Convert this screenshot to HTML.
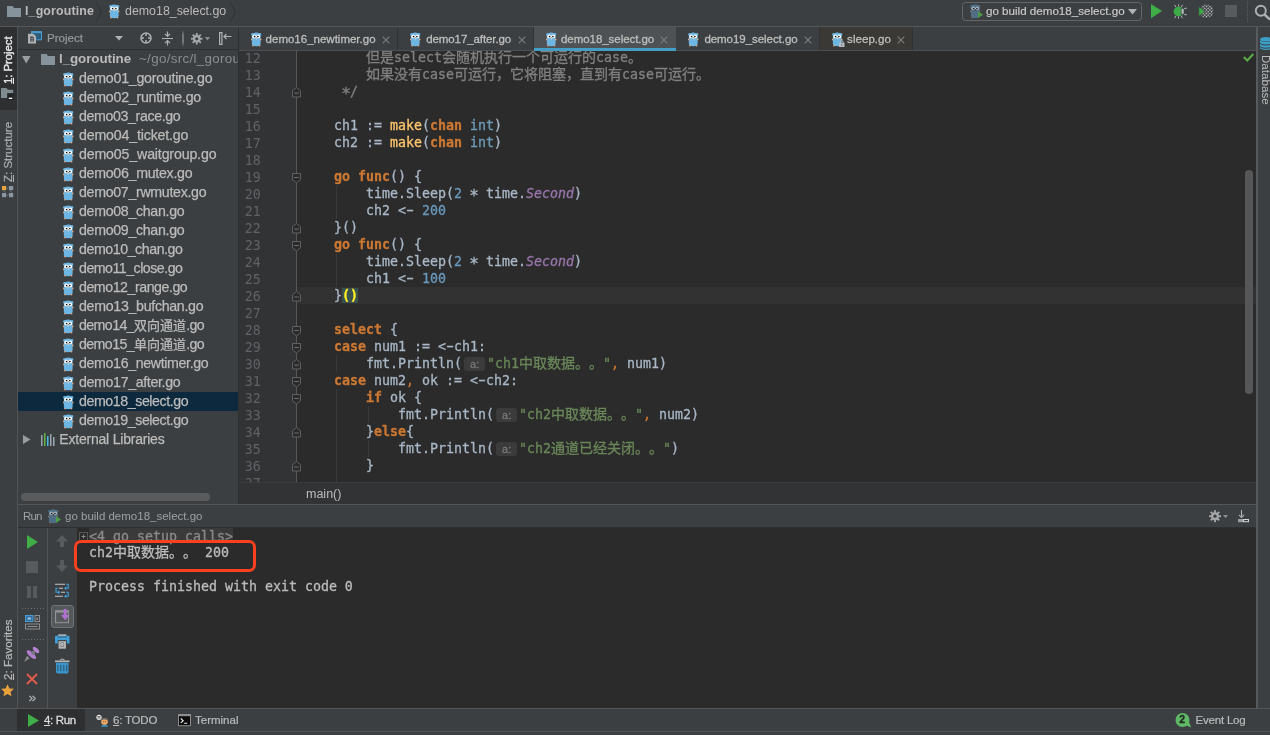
<!DOCTYPE html>
<html lang="zh">
<head>
<meta charset="utf-8">
<title>l_goroutine - demo18_select.go</title>
<style>
*{box-sizing:border-box;margin:0;padding:0}
html,body{width:1270px;height:735px;overflow:hidden;background:#3c3f41}
body{position:relative;font-family:"Liberation Sans","Noto Sans CJK SC",sans-serif;font-size:13px;color:#bbbbbb;-webkit-font-smoothing:antialiased;text-spacing-trim:space-all}
.abs{position:absolute}
.t{position:absolute;white-space:nowrap;line-height:16px;height:16px}
svg{position:absolute;overflow:visible}
.b{font-weight:bold}
.hl{position:absolute;background:#323232;height:1px}
.vl{position:absolute;background:#323232;width:1px}
/* tree */
.row{position:absolute;left:18px;width:220px;height:19px}
.row .t{left:61px;top:0.5px;font-size:14.2px;letter-spacing:-0.38px;color:#bbbbbb;-webkit-text-stroke:0.25px #bbbbbb}
.row svg.gi{left:44.8px;top:2.8px}
/* editor tabs */
.tab{position:absolute;top:27px;height:24px;border-right:1px solid #323232}
.tab .t{top:4px;font-size:11.5px;color:#bebebe;-webkit-text-stroke:0.3px}
.tab .x{position:absolute;top:9px;width:8px;height:8px}
/* code */
.code{font-family:"DejaVu Sans Mono","Liberation Mono","Noto Sans CJK SC",monospace;font-size:13.3px}
.ln{position:absolute;left:239px;width:21.800px;text-align:right;font-family:"DejaVu Sans Mono","Liberation Mono",monospace;font-size:13.29px;color:#606366;height:17px;line-height:17px;padding-top:1px}
.cl{position:absolute;left:302px;height:17px;line-height:17px;white-space:pre;color:#a9b7c6;-webkit-text-stroke:0.3px;font-family:"DejaVu Sans Mono","Liberation Mono","Noto Sans CJK SC",monospace;font-size:13.29px}
.k{color:#cc7832;font-weight:bold}
.f{color:#ffc66d}
.n{color:#6897bb}
.s{color:#6a8759}
.c{color:#808080}
.ty{color:#6e9db7}
.cn{color:#9876aa;font-style:italic}
.cm{color:#cc7832}
.hint{display:inline-block;background:#3b3b3b;color:#787878;border-radius:3px;font-family:"Liberation Sans",sans-serif;font-size:11px;line-height:14px;height:14px;width:20.5px;text-align:center;margin:0 2.200px 0 2.5px;vertical-align:0.5px;font-weight:normal}
.mb{background:#3b514d;color:#ffef28;font-weight:bold}
.z{font-size:14px}
.s .z{font-size:14px}
.zc{font-size:14px}
.as{position:relative;top:3px;left:-0.8px;font-size:16px;line-height:10px;letter-spacing:-1.630px}
.da{display:inline-block;transform:scaleX(1.700)}
.ig{position:absolute;width:1px;background:#393939}
.con{position:absolute;left:89px;white-space:pre;-webkit-text-stroke:0.3px;font-family:"DejaVu Sans Mono","Liberation Mono","Noto Sans CJK SC",monospace;font-size:13.29px;line-height:17px;height:17px;color:#bbbbbb}
.vt{position:absolute;white-space:nowrap;font-size:12px;line-height:14px;color:#bbbbbb;transform-origin:0 0}
</style>
</head>
<body>
<div id="app" style="position:absolute;left:0;top:0;width:1270px;height:735px;overflow:hidden;will-change:transform">
<!-- NAV BAR -->
<div id="nav" class="abs" style="left:0;top:0;width:1270px;height:26px;background:#3c3f41">
  <svg style="left:7px;top:6px" width="14" height="11" viewBox="0 0 14 11"><path d="M0 0H5.600L7 2H14V11H0z" fill="#87939a"/></svg>
  <span class="t b" id="bc1" style="left:25px;top:3px;font-size:12.4px;letter-spacing:0.15px">l_goroutine</span>
  <svg style="left:94px;top:0" width="10" height="24"><path d="M1.500 1L7.500 12L1.500 23" stroke="#2f3133" stroke-width="1" fill="none"/></svg>
  <svg style="left:109px;top:3.800px" width="10.500" height="14.500" viewBox="0 0 11 15"><circle cx="1.700" cy="2.500" r="1.500" fill="#6db6e3"/> <circle cx="9.300" cy="2.500" r="1.500" fill="#6db6e3"/> <path d="M.9 5C.9 2 3 .3 5.500.3S10.100 2 10.100 5V12.200C10.100 14 8.400 14.800 5.500 14.800S.9 14 .9 12.200z" fill="#6db6e3"/> <circle cx="3.300" cy="4.500" r="2" fill="#fdfdfd"/> <circle cx="7.700" cy="4.500" r="2" fill="#fdfdfd"/> <rect x="4.500" y="3.800" width="2" height="1.800" fill="#fdfdfd"/> <circle cx="3.800" cy="4.700" r=".85" fill="#0a0a0a"/> <circle cx="7.200" cy="4.700" r=".85" fill="#0a0a0a"/> <ellipse cx="5.500" cy="6.100" rx="1" ry=".65" fill="#a8907c"/> <rect x="4.900" y="6.500" width="1.200" height="1.100" rx=".3" fill="#f7f3ea"/> <ellipse cx=".8" cy="7.700" rx=".8" ry=".95" fill="#e3ab86"/> <ellipse cx="10.200" cy="7.700" rx=".8" ry=".95" fill="#e3ab86"/> <ellipse cx="2.100" cy="14.300" rx=".95" ry=".7" fill="#e3ab86"/> <ellipse cx="8.900" cy="14.300" rx=".95" ry=".7" fill="#e3ab86"/></svg>
  <span class="t" id="bc2" style="left:125px;top:3px;font-size:12.4px">demo18_select.go</span>
  <svg style="left:228px;top:0" width="10" height="24"><path d="M1.500 1L7.500 12L1.500 23" stroke="#2f3133" stroke-width="1" fill="none"/></svg>
  <!-- run config -->
  <div class="abs" style="left:962px;top:1.800px;width:179.500px;height:19.300px;border:1.200px solid #646768;border-radius:3.500px;background:#3c3f41"></div>
  <svg style="left:969.600px;top:3.700px" width="13.500" height="14.500" viewBox="0 0 14 15"><circle cx="1.700" cy="2.500" r="1.500" fill="#4f6e85"/> <circle cx="9.300" cy="2.500" r="1.500" fill="#4f6e85"/> <path d="M.9 5C.9 2 3 .3 5.500.3S10.100 2 10.100 5V12.200C10.100 14 8.400 14.800 5.500 14.800S.9 14 .9 12.200z" fill="#4f6e85"/> <circle cx="3.400" cy="4.500" r="1.800" fill="#aeb8c0"/> <circle cx="7.600" cy="4.500" r="1.800" fill="#aeb8c0"/> <rect x="4.500" y="3.900" width="2" height="1.600" fill="#aeb8c0"/> <circle cx="3.800" cy="4.700" r=".85" fill="#151515"/> <circle cx="7.200" cy="4.700" r=".85" fill="#151515"/> <ellipse cx="5.500" cy="6.100" rx="1" ry=".65" fill="#3a3a3a"/> <ellipse cx=".8" cy="7.700" rx=".7" ry=".9" fill="#8a7566"/> <ellipse cx="10.200" cy="7.300" rx=".6" ry=".8" fill="#8a7566"/> <ellipse cx="2.100" cy="14.300" rx=".9" ry=".7" fill="#8a7566"/> <path d="M8.300 7.400L13.600 11L8.300 14.600z" fill="#4f9a48"/></svg>
  <span class="t" id="rc" style="left:986px;top:3px;font-size:11.6px;color:#c8c8c8;-webkit-text-stroke:0.2px">go build demo18_select.go</span>
  <svg style="left:1128px;top:9px" width="9" height="6"><path d="M0 0H9L4.500 5.500z" fill="#afb1b3"/></svg>
  <svg style="left:1150.700px;top:4px" width="11" height="14.200" viewBox="0 0 10 14" preserveAspectRatio="none"><path d="M0 0L10 7L0 14z" fill="#3fae47"/></svg>
  <!-- debug bug -->
  <svg style="left:1173px;top:3.5px" width="16" height="15" viewBox="0 0 16 15">
    <path d="M3 3.200L1.600 .8M5.600 2.600V.5M8.200 3.200L9.600 .8M3 11.800L1.600 14.200M5.600 12.400V14.500M8.200 11.800L9.600 14.200" stroke="#b4b6b8" stroke-width="1" fill="none"/>
    <ellipse cx="5.800" cy="7.500" rx="5.200" ry="4.800" fill="#3aab46"/>
    <path d="M7.800 3.300Q13.800 7.500 7.800 11.700z" fill="#3c3f41"/>
    <path d="M8.800 4.300Q13 7.500 8.800 10.700Q7.600 7.500 8.800 4.300z" fill="#b4b6b8"/>
    <path d="M10.500 5.500Q11.500 3.800 13.800 4.200M10.500 9.500Q11.500 11.200 13.800 10.800" stroke="#b4b6b8" stroke-width="1" fill="none"/>
  </svg>
  <!-- coverage -->
  <svg style="left:1198px;top:3.5px" width="16" height="15" viewBox="0 0 16 15">
    <defs><pattern id="chk" width="2.400" height="2.400" patternUnits="userSpaceOnUse" patternTransform="rotate(45)"><rect width="1.300" height="1.300" fill="#d4d6d8"/></pattern>
    <clipPath id="chkc"><path d="M3.500 2Q9 -1 14.500 2.500Q16 7.500 14.500 11.500Q9 15.500 3.500 12.500z"/></clipPath></defs>
    <rect x="3" y="0" width="13" height="15" fill="url(#chk)" clip-path="url(#chkc)"/>
    <path d="M.8 2.500L6.800 7.300L.8 12.200z" fill="#3aab46" stroke="#3c3f41" stroke-width=".6"/>
  </svg>
  <div class="abs" style="left:1225px;top:5px;width:12px;height:12px;background:#585b5d"></div>
  <div class="abs" style="left:1247px;top:1px;width:1px;height:22px;background-image:linear-gradient(#5c5f60 50%,transparent 50%);background-size:1px 2px"></div>
  <svg style="left:1254px;top:3px" width="17" height="17" viewBox="0 0 17 17"><circle cx="6.800" cy="7.700" r="5" stroke="#afb1b3" stroke-width="1.900" fill="none"/><path d="M10.500 11.500L16 16.500" stroke="#afb1b3" stroke-width="2.400"/></svg>
</div>
<div class="hl" style="left:0;top:26px;width:1270px;background:#555759"></div>

<!-- LEFT STRIPE -->
<div id="lstripe" class="abs" style="left:0;top:27px;width:17px;height:681px;background:#3c3f41">
  <div class="abs" style="left:0;top:0;width:17px;height:83px;background:#2d2f30"></div>
  <span class="vt" id="v1" style="left:1px;top:56.5px;transform:rotate(-90deg);font-size:11.5px;letter-spacing:-0.1px;color:#e4e4e4;-webkit-text-stroke:0.4px #e4e4e4"><u>1</u>: Project</span>
  <svg style="left:1px;top:61px" width="13" height="12" viewBox="0 0 13 12"><path d="M0 0H5.500L7 1.800H12.200V5.300H6.300V10H0z" fill="#7f8b91"/><rect x="6.400" y="5.300" width="6.300" height="6.500" fill="#232525"/><rect x="7.800" y="9.700" width="3.500" height="1.300" fill="#ffffff"/></svg>
  <span class="vt" id="v2" style="left:1px;top:154.5px;transform:rotate(-90deg);font-size:11.5px;color:#a8abad;-webkit-text-stroke:0.25px"><u>Z</u>: Structure</span>
  <svg style="left:2px;top:159px" width="12" height="12" viewBox="0 0 12 12"><rect x="0" y="0" width="4.200" height="4.200" fill="#e8a33d"/><rect x="7" y="0" width="4.200" height="4.200" fill="#8a96a0"/><rect x="0" y="7" width="4.200" height="4.200" fill="#8a96a0"/><rect x="7" y="7" width="4.200" height="4.200" fill="#8a96a0"/><path d="M4.500 3L6.700 1.500M1.500 4.500L3.500 6.700M8 4.500L9.800 6.700M4.500 9.800L6.700 8.300" stroke="#6f7b85" stroke-width="1"/></svg>
  <span class="vt" id="v3" style="left:1px;top:652.5px;transform:rotate(-90deg);font-size:11.6px;-webkit-text-stroke:0.2px"><u>2</u>: Favorites</span>
  <svg style="left:1px;top:656.5px" width="13" height="12.5" viewBox="0 0 14 13"><path d="M7 0L9.100 4.500L14 5L10.300 8.300L11.400 13L7 10.500L2.600 13L3.700 8.300L0 5L4.900 4.500z" fill="#e8a33d"/></svg>
</div>
<div class="vl" style="left:17px;top:27px;height:681px;background:#515355"></div>

<!-- PROJECT PANEL -->
<div id="proj" class="abs" style="left:18px;top:27px;width:220px;height:477px;background:#3c3f41">
  <!-- header -->
  <svg style="left:10px;top:3.500px" width="15" height="13" viewBox="0 0 15 13"><rect x="3.500" y=".8" width="10" height="8" fill="#2f5d7c" stroke="#4a9cd0" stroke-width="1"/><rect x="3" y=".3" width="11" height="1.800" fill="#4a9cd0"/><path d="M0 2.800H5.500L8 5.300V12.500H0z" fill="#b0b2b4"/><path d="M2.300 5.500H4.800L5.800 6.500V10.500H2.300z" fill="#3c3f41"/><path d="M3.200 7.300H5M3.200 9.200H5" stroke="#b0b2b4" stroke-width=".9"/></svg>
  <span class="t" id="ph" style="left:29px;top:3px;font-size:11.6px;color:#979a9c;-webkit-text-stroke:0.2px">Project</span>
  <svg style="left:97px;top:9px" width="8" height="5"><path d="M0 0H8L4 4.500z" fill="#afb1b3"/></svg>
  <svg style="left:122px;top:5px" width="12" height="12" viewBox="0 0 12 12"><circle cx="6" cy="6" r="5" stroke="#afb1b3" stroke-width="1.500" fill="none"/><path d="M6 1V4M6 8V11M1 6H4M8 6H11" stroke="#afb1b3" stroke-width="1.500"/></svg>
  <svg style="left:144px;top:4px" width="11" height="15" viewBox="0 0 11 15"><path d="M0 7.500H11M5.500 .5V5M5.500 10V14.500M3 2.800L5.500 5.300L8 2.800M3 12.200L5.500 9.700L8 12.200" stroke="#afb1b3" stroke-width="1.200" fill="none"/></svg>
  <div class="abs" style="left:164px;top:3px;width:2px;height:17px;background:linear-gradient(#3c3f41,#74777a 30%,#74777a 70%,#3c3f41)"></div>
  <svg style="left:173px;top:6px" width="11.5" height="11.5" viewBox="0 0 14 14"><g fill="#a4a6a8"> <circle cx="7" cy="7" r="4.6"/> <rect x="5.900" y="0" width="2.200" height="14"/> <rect x="5.900" y="0" width="2.200" height="14" transform="rotate(45 7 7)"/> <rect x="5.900" y="0" width="2.200" height="14" transform="rotate(90 7 7)"/> <rect x="5.900" y="0" width="2.200" height="14" transform="rotate(135 7 7)"/> </g> <circle cx="7" cy="7" r="1.900" fill="#3c3f41"/></svg>
  <svg style="left:187px;top:10px" width="5" height="4"><path d="M0 0H5L2.500 3.500z" fill="#8a8c8e"/></svg>
  <svg style="left:200.500px;top:5px" width="13" height="13" viewBox="0 0 13 13"><rect x=".6" y=".6" width="2.300" height="11.800" fill="none" stroke="#afb1b3" stroke-width="1.200"/><path d="M5 4.500H12.500M7.500 2L5 4.500L7.500 7" stroke="#afb1b3" stroke-width="1.200" fill="none"/></svg>
  <div class="hl" style="left:0;top:22px;width:220px;background:#2d2f30"></div>
  <!-- tree root -->
  <div class="row" style="left:0;top:23px"><svg style="left:3.500px;top:6px" width="9" height="8"><path d="M0 0H8.500L4.250 7.500z" fill="#9a9da0"/></svg><svg style="left:23px;top:4px" width="14" height="11" viewBox="0 0 14 11"><path d="M0 0H5.600L7 2H14V11H0z" fill="#87939a"/></svg><span class="t b" id="tr0" style="left:41px;font-size:13.4px;letter-spacing:-0.08px;-webkit-text-stroke:0">l_goroutine</span><span class="t" id="tr0p" style="left:121px;font-size:13.4px;letter-spacing:0.3px;color:#8a8d8f;-webkit-text-stroke:0">~/go/src/l_goroutine</span></div>
  <div class="row"  style="left:0;top:42px"><svg class="gi" width="10.5" height="14.5" viewBox="0 0 11 15"><circle cx="1.700" cy="2.500" r="1.500" fill="#6db6e3"/> <circle cx="9.300" cy="2.500" r="1.500" fill="#6db6e3"/> <path d="M.9 5C.9 2 3 .3 5.500.3S10.100 2 10.100 5V12.200C10.100 14 8.400 14.800 5.500 14.800S.9 14 .9 12.200z" fill="#6db6e3"/> <circle cx="3.300" cy="4.500" r="2" fill="#fdfdfd"/> <circle cx="7.700" cy="4.500" r="2" fill="#fdfdfd"/> <rect x="4.500" y="3.800" width="2" height="1.800" fill="#fdfdfd"/> <circle cx="3.800" cy="4.700" r=".85" fill="#0a0a0a"/> <circle cx="7.200" cy="4.700" r=".85" fill="#0a0a0a"/> <ellipse cx="5.500" cy="6.100" rx="1" ry=".65" fill="#a8907c"/> <rect x="4.900" y="6.500" width="1.200" height="1.100" rx=".3" fill="#f7f3ea"/> <ellipse cx=".8" cy="7.700" rx=".8" ry=".95" fill="#e3ab86"/> <ellipse cx="10.200" cy="7.700" rx=".8" ry=".95" fill="#e3ab86"/> <ellipse cx="2.100" cy="14.300" rx=".95" ry=".7" fill="#e3ab86"/> <ellipse cx="8.900" cy="14.300" rx=".95" ry=".7" fill="#e3ab86"/></svg><span class="t" style="letter-spacing:-0.25px">demo01_goroutine.go</span></div>
  <div class="row"  style="left:0;top:61px"><svg class="gi" width="10.5" height="14.5" viewBox="0 0 11 15"><circle cx="1.700" cy="2.500" r="1.500" fill="#6db6e3"/> <circle cx="9.300" cy="2.500" r="1.500" fill="#6db6e3"/> <path d="M.9 5C.9 2 3 .3 5.500.3S10.100 2 10.100 5V12.200C10.100 14 8.400 14.800 5.500 14.800S.9 14 .9 12.200z" fill="#6db6e3"/> <circle cx="3.300" cy="4.500" r="2" fill="#fdfdfd"/> <circle cx="7.700" cy="4.500" r="2" fill="#fdfdfd"/> <rect x="4.500" y="3.800" width="2" height="1.800" fill="#fdfdfd"/> <circle cx="3.800" cy="4.700" r=".85" fill="#0a0a0a"/> <circle cx="7.200" cy="4.700" r=".85" fill="#0a0a0a"/> <ellipse cx="5.500" cy="6.100" rx="1" ry=".65" fill="#a8907c"/> <rect x="4.900" y="6.500" width="1.200" height="1.100" rx=".3" fill="#f7f3ea"/> <ellipse cx=".8" cy="7.700" rx=".8" ry=".95" fill="#e3ab86"/> <ellipse cx="10.200" cy="7.700" rx=".8" ry=".95" fill="#e3ab86"/> <ellipse cx="2.100" cy="14.300" rx=".95" ry=".7" fill="#e3ab86"/> <ellipse cx="8.900" cy="14.300" rx=".95" ry=".7" fill="#e3ab86"/></svg><span class="t" style="letter-spacing:-0.25px">demo02_runtime.go</span></div>
  <div class="row"  style="left:0;top:80px"><svg class="gi" width="10.5" height="14.5" viewBox="0 0 11 15"><circle cx="1.700" cy="2.500" r="1.500" fill="#6db6e3"/> <circle cx="9.300" cy="2.500" r="1.500" fill="#6db6e3"/> <path d="M.9 5C.9 2 3 .3 5.500.3S10.100 2 10.100 5V12.200C10.100 14 8.400 14.800 5.500 14.800S.9 14 .9 12.200z" fill="#6db6e3"/> <circle cx="3.300" cy="4.500" r="2" fill="#fdfdfd"/> <circle cx="7.700" cy="4.500" r="2" fill="#fdfdfd"/> <rect x="4.500" y="3.800" width="2" height="1.800" fill="#fdfdfd"/> <circle cx="3.800" cy="4.700" r=".85" fill="#0a0a0a"/> <circle cx="7.200" cy="4.700" r=".85" fill="#0a0a0a"/> <ellipse cx="5.500" cy="6.100" rx="1" ry=".65" fill="#a8907c"/> <rect x="4.900" y="6.500" width="1.200" height="1.100" rx=".3" fill="#f7f3ea"/> <ellipse cx=".8" cy="7.700" rx=".8" ry=".95" fill="#e3ab86"/> <ellipse cx="10.200" cy="7.700" rx=".8" ry=".95" fill="#e3ab86"/> <ellipse cx="2.100" cy="14.300" rx=".95" ry=".7" fill="#e3ab86"/> <ellipse cx="8.900" cy="14.300" rx=".95" ry=".7" fill="#e3ab86"/></svg><span class="t" style="letter-spacing:-0.37px">demo03_race.go</span></div>
  <div class="row"  style="left:0;top:99px"><svg class="gi" width="10.5" height="14.5" viewBox="0 0 11 15"><circle cx="1.700" cy="2.500" r="1.500" fill="#6db6e3"/> <circle cx="9.300" cy="2.500" r="1.500" fill="#6db6e3"/> <path d="M.9 5C.9 2 3 .3 5.500.3S10.100 2 10.100 5V12.200C10.100 14 8.400 14.800 5.500 14.800S.9 14 .9 12.200z" fill="#6db6e3"/> <circle cx="3.300" cy="4.500" r="2" fill="#fdfdfd"/> <circle cx="7.700" cy="4.500" r="2" fill="#fdfdfd"/> <rect x="4.500" y="3.800" width="2" height="1.800" fill="#fdfdfd"/> <circle cx="3.800" cy="4.700" r=".85" fill="#0a0a0a"/> <circle cx="7.200" cy="4.700" r=".85" fill="#0a0a0a"/> <ellipse cx="5.500" cy="6.100" rx="1" ry=".65" fill="#a8907c"/> <rect x="4.900" y="6.500" width="1.200" height="1.100" rx=".3" fill="#f7f3ea"/> <ellipse cx=".8" cy="7.700" rx=".8" ry=".95" fill="#e3ab86"/> <ellipse cx="10.200" cy="7.700" rx=".8" ry=".95" fill="#e3ab86"/> <ellipse cx="2.100" cy="14.300" rx=".95" ry=".7" fill="#e3ab86"/> <ellipse cx="8.900" cy="14.300" rx=".95" ry=".7" fill="#e3ab86"/></svg><span class="t" style="letter-spacing:-0.17px">demo04_ticket.go</span></div>
  <div class="row"  style="left:0;top:118px"><svg class="gi" width="10.5" height="14.5" viewBox="0 0 11 15"><circle cx="1.700" cy="2.500" r="1.500" fill="#6db6e3"/> <circle cx="9.300" cy="2.500" r="1.500" fill="#6db6e3"/> <path d="M.9 5C.9 2 3 .3 5.500.3S10.100 2 10.100 5V12.200C10.100 14 8.400 14.800 5.500 14.800S.9 14 .9 12.200z" fill="#6db6e3"/> <circle cx="3.300" cy="4.500" r="2" fill="#fdfdfd"/> <circle cx="7.700" cy="4.500" r="2" fill="#fdfdfd"/> <rect x="4.500" y="3.800" width="2" height="1.800" fill="#fdfdfd"/> <circle cx="3.800" cy="4.700" r=".85" fill="#0a0a0a"/> <circle cx="7.200" cy="4.700" r=".85" fill="#0a0a0a"/> <ellipse cx="5.500" cy="6.100" rx="1" ry=".65" fill="#a8907c"/> <rect x="4.900" y="6.500" width="1.200" height="1.100" rx=".3" fill="#f7f3ea"/> <ellipse cx=".8" cy="7.700" rx=".8" ry=".95" fill="#e3ab86"/> <ellipse cx="10.200" cy="7.700" rx=".8" ry=".95" fill="#e3ab86"/> <ellipse cx="2.100" cy="14.300" rx=".95" ry=".7" fill="#e3ab86"/> <ellipse cx="8.900" cy="14.300" rx=".95" ry=".7" fill="#e3ab86"/></svg><span class="t" style="letter-spacing:-0.16px">demo05_waitgroup.go</span></div>
  <div class="row"  style="left:0;top:137px"><svg class="gi" width="10.5" height="14.5" viewBox="0 0 11 15"><circle cx="1.700" cy="2.500" r="1.500" fill="#6db6e3"/> <circle cx="9.300" cy="2.500" r="1.500" fill="#6db6e3"/> <path d="M.9 5C.9 2 3 .3 5.500.3S10.100 2 10.100 5V12.200C10.100 14 8.400 14.800 5.500 14.800S.9 14 .9 12.200z" fill="#6db6e3"/> <circle cx="3.300" cy="4.500" r="2" fill="#fdfdfd"/> <circle cx="7.700" cy="4.500" r="2" fill="#fdfdfd"/> <rect x="4.500" y="3.800" width="2" height="1.800" fill="#fdfdfd"/> <circle cx="3.800" cy="4.700" r=".85" fill="#0a0a0a"/> <circle cx="7.200" cy="4.700" r=".85" fill="#0a0a0a"/> <ellipse cx="5.500" cy="6.100" rx="1" ry=".65" fill="#a8907c"/> <rect x="4.900" y="6.500" width="1.200" height="1.100" rx=".3" fill="#f7f3ea"/> <ellipse cx=".8" cy="7.700" rx=".8" ry=".95" fill="#e3ab86"/> <ellipse cx="10.200" cy="7.700" rx=".8" ry=".95" fill="#e3ab86"/> <ellipse cx="2.100" cy="14.300" rx=".95" ry=".7" fill="#e3ab86"/> <ellipse cx="8.900" cy="14.300" rx=".95" ry=".7" fill="#e3ab86"/></svg><span class="t" style="letter-spacing:-0.28px">demo06_mutex.go</span></div>
  <div class="row"  style="left:0;top:156px"><svg class="gi" width="10.5" height="14.5" viewBox="0 0 11 15"><circle cx="1.700" cy="2.500" r="1.500" fill="#6db6e3"/> <circle cx="9.300" cy="2.500" r="1.500" fill="#6db6e3"/> <path d="M.9 5C.9 2 3 .3 5.500.3S10.100 2 10.100 5V12.200C10.100 14 8.400 14.800 5.500 14.800S.9 14 .9 12.200z" fill="#6db6e3"/> <circle cx="3.300" cy="4.500" r="2" fill="#fdfdfd"/> <circle cx="7.700" cy="4.500" r="2" fill="#fdfdfd"/> <rect x="4.500" y="3.800" width="2" height="1.800" fill="#fdfdfd"/> <circle cx="3.800" cy="4.700" r=".85" fill="#0a0a0a"/> <circle cx="7.200" cy="4.700" r=".85" fill="#0a0a0a"/> <ellipse cx="5.500" cy="6.100" rx="1" ry=".65" fill="#a8907c"/> <rect x="4.900" y="6.500" width="1.200" height="1.100" rx=".3" fill="#f7f3ea"/> <ellipse cx=".8" cy="7.700" rx=".8" ry=".95" fill="#e3ab86"/> <ellipse cx="10.200" cy="7.700" rx=".8" ry=".95" fill="#e3ab86"/> <ellipse cx="2.100" cy="14.300" rx=".95" ry=".7" fill="#e3ab86"/> <ellipse cx="8.900" cy="14.300" rx=".95" ry=".7" fill="#e3ab86"/></svg><span class="t" style="letter-spacing:-0.31px">demo07_rwmutex.go</span></div>
  <div class="row"  style="left:0;top:175px"><svg class="gi" width="10.5" height="14.5" viewBox="0 0 11 15"><circle cx="1.700" cy="2.500" r="1.500" fill="#6db6e3"/> <circle cx="9.300" cy="2.500" r="1.500" fill="#6db6e3"/> <path d="M.9 5C.9 2 3 .3 5.500.3S10.100 2 10.100 5V12.200C10.100 14 8.400 14.800 5.500 14.800S.9 14 .9 12.200z" fill="#6db6e3"/> <circle cx="3.300" cy="4.500" r="2" fill="#fdfdfd"/> <circle cx="7.700" cy="4.500" r="2" fill="#fdfdfd"/> <rect x="4.500" y="3.800" width="2" height="1.800" fill="#fdfdfd"/> <circle cx="3.800" cy="4.700" r=".85" fill="#0a0a0a"/> <circle cx="7.200" cy="4.700" r=".85" fill="#0a0a0a"/> <ellipse cx="5.500" cy="6.100" rx="1" ry=".65" fill="#a8907c"/> <rect x="4.900" y="6.500" width="1.200" height="1.100" rx=".3" fill="#f7f3ea"/> <ellipse cx=".8" cy="7.700" rx=".8" ry=".95" fill="#e3ab86"/> <ellipse cx="10.200" cy="7.700" rx=".8" ry=".95" fill="#e3ab86"/> <ellipse cx="2.100" cy="14.300" rx=".95" ry=".7" fill="#e3ab86"/> <ellipse cx="8.900" cy="14.300" rx=".95" ry=".7" fill="#e3ab86"/></svg><span class="t" style="letter-spacing:-0.31px">demo08_chan.go</span></div>
  <div class="row"  style="left:0;top:194px"><svg class="gi" width="10.5" height="14.5" viewBox="0 0 11 15"><circle cx="1.700" cy="2.500" r="1.500" fill="#6db6e3"/> <circle cx="9.300" cy="2.500" r="1.500" fill="#6db6e3"/> <path d="M.9 5C.9 2 3 .3 5.500.3S10.100 2 10.100 5V12.200C10.100 14 8.400 14.800 5.500 14.800S.9 14 .9 12.200z" fill="#6db6e3"/> <circle cx="3.300" cy="4.500" r="2" fill="#fdfdfd"/> <circle cx="7.700" cy="4.500" r="2" fill="#fdfdfd"/> <rect x="4.500" y="3.800" width="2" height="1.800" fill="#fdfdfd"/> <circle cx="3.800" cy="4.700" r=".85" fill="#0a0a0a"/> <circle cx="7.200" cy="4.700" r=".85" fill="#0a0a0a"/> <ellipse cx="5.500" cy="6.100" rx="1" ry=".65" fill="#a8907c"/> <rect x="4.900" y="6.500" width="1.200" height="1.100" rx=".3" fill="#f7f3ea"/> <ellipse cx=".8" cy="7.700" rx=".8" ry=".95" fill="#e3ab86"/> <ellipse cx="10.200" cy="7.700" rx=".8" ry=".95" fill="#e3ab86"/> <ellipse cx="2.100" cy="14.300" rx=".95" ry=".7" fill="#e3ab86"/> <ellipse cx="8.900" cy="14.300" rx=".95" ry=".7" fill="#e3ab86"/></svg><span class="t" style="letter-spacing:-0.31px">demo09_chan.go</span></div>
  <div class="row"  style="left:0;top:213px"><svg class="gi" width="10.5" height="14.5" viewBox="0 0 11 15"><circle cx="1.700" cy="2.500" r="1.500" fill="#6db6e3"/> <circle cx="9.300" cy="2.500" r="1.500" fill="#6db6e3"/> <path d="M.9 5C.9 2 3 .3 5.500.3S10.100 2 10.100 5V12.200C10.100 14 8.400 14.800 5.500 14.800S.9 14 .9 12.200z" fill="#6db6e3"/> <circle cx="3.300" cy="4.500" r="2" fill="#fdfdfd"/> <circle cx="7.700" cy="4.500" r="2" fill="#fdfdfd"/> <rect x="4.500" y="3.800" width="2" height="1.800" fill="#fdfdfd"/> <circle cx="3.800" cy="4.700" r=".85" fill="#0a0a0a"/> <circle cx="7.200" cy="4.700" r=".85" fill="#0a0a0a"/> <ellipse cx="5.500" cy="6.100" rx="1" ry=".65" fill="#a8907c"/> <rect x="4.900" y="6.500" width="1.200" height="1.100" rx=".3" fill="#f7f3ea"/> <ellipse cx=".8" cy="7.700" rx=".8" ry=".95" fill="#e3ab86"/> <ellipse cx="10.200" cy="7.700" rx=".8" ry=".95" fill="#e3ab86"/> <ellipse cx="2.100" cy="14.300" rx=".95" ry=".7" fill="#e3ab86"/> <ellipse cx="8.900" cy="14.300" rx=".95" ry=".7" fill="#e3ab86"/></svg><span class="t" style="letter-spacing:-0.44px">demo10_chan.go</span></div>
  <div class="row"  style="left:0;top:232px"><svg class="gi" width="10.5" height="14.5" viewBox="0 0 11 15"><circle cx="1.700" cy="2.500" r="1.500" fill="#6db6e3"/> <circle cx="9.300" cy="2.500" r="1.500" fill="#6db6e3"/> <path d="M.9 5C.9 2 3 .3 5.500.3S10.100 2 10.100 5V12.200C10.100 14 8.400 14.800 5.500 14.800S.9 14 .9 12.200z" fill="#6db6e3"/> <circle cx="3.300" cy="4.500" r="2" fill="#fdfdfd"/> <circle cx="7.700" cy="4.500" r="2" fill="#fdfdfd"/> <rect x="4.500" y="3.800" width="2" height="1.800" fill="#fdfdfd"/> <circle cx="3.800" cy="4.700" r=".85" fill="#0a0a0a"/> <circle cx="7.200" cy="4.700" r=".85" fill="#0a0a0a"/> <ellipse cx="5.500" cy="6.100" rx="1" ry=".65" fill="#a8907c"/> <rect x="4.900" y="6.500" width="1.200" height="1.100" rx=".3" fill="#f7f3ea"/> <ellipse cx=".8" cy="7.700" rx=".8" ry=".95" fill="#e3ab86"/> <ellipse cx="10.200" cy="7.700" rx=".8" ry=".95" fill="#e3ab86"/> <ellipse cx="2.100" cy="14.300" rx=".95" ry=".7" fill="#e3ab86"/> <ellipse cx="8.900" cy="14.300" rx=".95" ry=".7" fill="#e3ab86"/></svg><span class="t" style="letter-spacing:-0.50px">demo11_close.go</span></div>
  <div class="row"  style="left:0;top:251px"><svg class="gi" width="10.5" height="14.5" viewBox="0 0 11 15"><circle cx="1.700" cy="2.500" r="1.500" fill="#6db6e3"/> <circle cx="9.300" cy="2.500" r="1.500" fill="#6db6e3"/> <path d="M.9 5C.9 2 3 .3 5.500.3S10.100 2 10.100 5V12.200C10.100 14 8.400 14.800 5.500 14.800S.9 14 .9 12.200z" fill="#6db6e3"/> <circle cx="3.300" cy="4.500" r="2" fill="#fdfdfd"/> <circle cx="7.700" cy="4.500" r="2" fill="#fdfdfd"/> <rect x="4.500" y="3.800" width="2" height="1.800" fill="#fdfdfd"/> <circle cx="3.800" cy="4.700" r=".85" fill="#0a0a0a"/> <circle cx="7.200" cy="4.700" r=".85" fill="#0a0a0a"/> <ellipse cx="5.500" cy="6.100" rx="1" ry=".65" fill="#a8907c"/> <rect x="4.900" y="6.500" width="1.200" height="1.100" rx=".3" fill="#f7f3ea"/> <ellipse cx=".8" cy="7.700" rx=".8" ry=".95" fill="#e3ab86"/> <ellipse cx="10.200" cy="7.700" rx=".8" ry=".95" fill="#e3ab86"/> <ellipse cx="2.100" cy="14.300" rx=".95" ry=".7" fill="#e3ab86"/> <ellipse cx="8.900" cy="14.300" rx=".95" ry=".7" fill="#e3ab86"/></svg><span class="t" style="letter-spacing:-0.46px">demo12_range.go</span></div>
  <div class="row"  style="left:0;top:270px"><svg class="gi" width="10.5" height="14.5" viewBox="0 0 11 15"><circle cx="1.700" cy="2.500" r="1.500" fill="#6db6e3"/> <circle cx="9.300" cy="2.500" r="1.500" fill="#6db6e3"/> <path d="M.9 5C.9 2 3 .3 5.500.3S10.100 2 10.100 5V12.200C10.100 14 8.400 14.800 5.500 14.800S.9 14 .9 12.200z" fill="#6db6e3"/> <circle cx="3.300" cy="4.500" r="2" fill="#fdfdfd"/> <circle cx="7.700" cy="4.500" r="2" fill="#fdfdfd"/> <rect x="4.500" y="3.800" width="2" height="1.800" fill="#fdfdfd"/> <circle cx="3.800" cy="4.700" r=".85" fill="#0a0a0a"/> <circle cx="7.200" cy="4.700" r=".85" fill="#0a0a0a"/> <ellipse cx="5.500" cy="6.100" rx="1" ry=".65" fill="#a8907c"/> <rect x="4.900" y="6.500" width="1.200" height="1.100" rx=".3" fill="#f7f3ea"/> <ellipse cx=".8" cy="7.700" rx=".8" ry=".95" fill="#e3ab86"/> <ellipse cx="10.200" cy="7.700" rx=".8" ry=".95" fill="#e3ab86"/> <ellipse cx="2.100" cy="14.300" rx=".95" ry=".7" fill="#e3ab86"/> <ellipse cx="8.900" cy="14.300" rx=".95" ry=".7" fill="#e3ab86"/></svg><span class="t" style="letter-spacing:-0.30px">demo13_bufchan.go</span></div>
  <div class="row"  style="left:0;top:289px"><svg class="gi" width="10.5" height="14.5" viewBox="0 0 11 15"><circle cx="1.700" cy="2.500" r="1.500" fill="#6db6e3"/> <circle cx="9.300" cy="2.500" r="1.500" fill="#6db6e3"/> <path d="M.9 5C.9 2 3 .3 5.500.3S10.100 2 10.100 5V12.200C10.100 14 8.400 14.800 5.500 14.800S.9 14 .9 12.200z" fill="#6db6e3"/> <circle cx="3.300" cy="4.500" r="2" fill="#fdfdfd"/> <circle cx="7.700" cy="4.500" r="2" fill="#fdfdfd"/> <rect x="4.500" y="3.800" width="2" height="1.800" fill="#fdfdfd"/> <circle cx="3.800" cy="4.700" r=".85" fill="#0a0a0a"/> <circle cx="7.200" cy="4.700" r=".85" fill="#0a0a0a"/> <ellipse cx="5.500" cy="6.100" rx="1" ry=".65" fill="#a8907c"/> <rect x="4.900" y="6.500" width="1.200" height="1.100" rx=".3" fill="#f7f3ea"/> <ellipse cx=".8" cy="7.700" rx=".8" ry=".95" fill="#e3ab86"/> <ellipse cx="10.200" cy="7.700" rx=".8" ry=".95" fill="#e3ab86"/> <ellipse cx="2.100" cy="14.300" rx=".95" ry=".7" fill="#e3ab86"/> <ellipse cx="8.900" cy="14.300" rx=".95" ry=".7" fill="#e3ab86"/></svg><span class="t" style="letter-spacing:-0.58px">demo14_<span style="font-size:13px;letter-spacing:0">双向通道</span>.go</span></div>
  <div class="row"  style="left:0;top:308px"><svg class="gi" width="10.5" height="14.5" viewBox="0 0 11 15"><circle cx="1.700" cy="2.500" r="1.500" fill="#6db6e3"/> <circle cx="9.300" cy="2.500" r="1.500" fill="#6db6e3"/> <path d="M.9 5C.9 2 3 .3 5.500.3S10.100 2 10.100 5V12.200C10.100 14 8.400 14.800 5.500 14.800S.9 14 .9 12.200z" fill="#6db6e3"/> <circle cx="3.300" cy="4.500" r="2" fill="#fdfdfd"/> <circle cx="7.700" cy="4.500" r="2" fill="#fdfdfd"/> <rect x="4.500" y="3.800" width="2" height="1.800" fill="#fdfdfd"/> <circle cx="3.800" cy="4.700" r=".85" fill="#0a0a0a"/> <circle cx="7.200" cy="4.700" r=".85" fill="#0a0a0a"/> <ellipse cx="5.500" cy="6.100" rx="1" ry=".65" fill="#a8907c"/> <rect x="4.900" y="6.500" width="1.200" height="1.100" rx=".3" fill="#f7f3ea"/> <ellipse cx=".8" cy="7.700" rx=".8" ry=".95" fill="#e3ab86"/> <ellipse cx="10.200" cy="7.700" rx=".8" ry=".95" fill="#e3ab86"/> <ellipse cx="2.100" cy="14.300" rx=".95" ry=".7" fill="#e3ab86"/> <ellipse cx="8.900" cy="14.300" rx=".95" ry=".7" fill="#e3ab86"/></svg><span class="t" style="letter-spacing:-0.58px">demo15_<span style="font-size:13px;letter-spacing:0">单向通道</span>.go</span></div>
  <div class="row"  style="left:0;top:327px"><svg class="gi" width="10.5" height="14.5" viewBox="0 0 11 15"><circle cx="1.700" cy="2.500" r="1.500" fill="#6db6e3"/> <circle cx="9.300" cy="2.500" r="1.500" fill="#6db6e3"/> <path d="M.9 5C.9 2 3 .3 5.500.3S10.100 2 10.100 5V12.200C10.100 14 8.400 14.800 5.500 14.800S.9 14 .9 12.200z" fill="#6db6e3"/> <circle cx="3.300" cy="4.500" r="2" fill="#fdfdfd"/> <circle cx="7.700" cy="4.500" r="2" fill="#fdfdfd"/> <rect x="4.500" y="3.800" width="2" height="1.800" fill="#fdfdfd"/> <circle cx="3.800" cy="4.700" r=".85" fill="#0a0a0a"/> <circle cx="7.200" cy="4.700" r=".85" fill="#0a0a0a"/> <ellipse cx="5.500" cy="6.100" rx="1" ry=".65" fill="#a8907c"/> <rect x="4.900" y="6.500" width="1.200" height="1.100" rx=".3" fill="#f7f3ea"/> <ellipse cx=".8" cy="7.700" rx=".8" ry=".95" fill="#e3ab86"/> <ellipse cx="10.200" cy="7.700" rx=".8" ry=".95" fill="#e3ab86"/> <ellipse cx="2.100" cy="14.300" rx=".95" ry=".7" fill="#e3ab86"/> <ellipse cx="8.900" cy="14.300" rx=".95" ry=".7" fill="#e3ab86"/></svg><span class="t" style="letter-spacing:-0.35px">demo16_newtimer.go</span></div>
  <div class="row"  style="left:0;top:346px"><svg class="gi" width="10.5" height="14.5" viewBox="0 0 11 15"><circle cx="1.700" cy="2.500" r="1.500" fill="#6db6e3"/> <circle cx="9.300" cy="2.500" r="1.500" fill="#6db6e3"/> <path d="M.9 5C.9 2 3 .3 5.500.3S10.100 2 10.100 5V12.200C10.100 14 8.400 14.800 5.500 14.800S.9 14 .9 12.200z" fill="#6db6e3"/> <circle cx="3.300" cy="4.500" r="2" fill="#fdfdfd"/> <circle cx="7.700" cy="4.500" r="2" fill="#fdfdfd"/> <rect x="4.500" y="3.800" width="2" height="1.800" fill="#fdfdfd"/> <circle cx="3.800" cy="4.700" r=".85" fill="#0a0a0a"/> <circle cx="7.200" cy="4.700" r=".85" fill="#0a0a0a"/> <ellipse cx="5.500" cy="6.100" rx="1" ry=".65" fill="#a8907c"/> <rect x="4.900" y="6.500" width="1.200" height="1.100" rx=".3" fill="#f7f3ea"/> <ellipse cx=".8" cy="7.700" rx=".8" ry=".95" fill="#e3ab86"/> <ellipse cx="10.200" cy="7.700" rx=".8" ry=".95" fill="#e3ab86"/> <ellipse cx="2.100" cy="14.300" rx=".95" ry=".7" fill="#e3ab86"/> <ellipse cx="8.900" cy="14.300" rx=".95" ry=".7" fill="#e3ab86"/></svg><span class="t" style="letter-spacing:-0.35px">demo17_after.go</span></div>
  <div class="row"  style="left:0;top:365px;background:#0d293e"><svg class="gi" width="10.5" height="14.5" viewBox="0 0 11 15"><circle cx="1.700" cy="2.500" r="1.500" fill="#6db6e3"/> <circle cx="9.300" cy="2.500" r="1.500" fill="#6db6e3"/> <path d="M.9 5C.9 2 3 .3 5.500.3S10.100 2 10.100 5V12.200C10.100 14 8.400 14.800 5.500 14.800S.9 14 .9 12.200z" fill="#6db6e3"/> <circle cx="3.300" cy="4.500" r="2" fill="#fdfdfd"/> <circle cx="7.700" cy="4.500" r="2" fill="#fdfdfd"/> <rect x="4.500" y="3.800" width="2" height="1.800" fill="#fdfdfd"/> <circle cx="3.800" cy="4.700" r=".85" fill="#0a0a0a"/> <circle cx="7.200" cy="4.700" r=".85" fill="#0a0a0a"/> <ellipse cx="5.500" cy="6.100" rx="1" ry=".65" fill="#a8907c"/> <rect x="4.900" y="6.500" width="1.200" height="1.100" rx=".3" fill="#f7f3ea"/> <ellipse cx=".8" cy="7.700" rx=".8" ry=".95" fill="#e3ab86"/> <ellipse cx="10.200" cy="7.700" rx=".8" ry=".95" fill="#e3ab86"/> <ellipse cx="2.100" cy="14.300" rx=".95" ry=".7" fill="#e3ab86"/> <ellipse cx="8.900" cy="14.300" rx=".95" ry=".7" fill="#e3ab86"/></svg><span class="t" style="letter-spacing:-0.42px">demo18_select.go</span></div>
  <div class="row"  style="left:0;top:384px"><svg class="gi" width="10.5" height="14.5" viewBox="0 0 11 15"><circle cx="1.700" cy="2.500" r="1.500" fill="#6db6e3"/> <circle cx="9.300" cy="2.500" r="1.500" fill="#6db6e3"/> <path d="M.9 5C.9 2 3 .3 5.500.3S10.100 2 10.100 5V12.200C10.100 14 8.400 14.800 5.500 14.800S.9 14 .9 12.200z" fill="#6db6e3"/> <circle cx="3.300" cy="4.500" r="2" fill="#fdfdfd"/> <circle cx="7.700" cy="4.500" r="2" fill="#fdfdfd"/> <rect x="4.500" y="3.800" width="2" height="1.800" fill="#fdfdfd"/> <circle cx="3.800" cy="4.700" r=".85" fill="#0a0a0a"/> <circle cx="7.200" cy="4.700" r=".85" fill="#0a0a0a"/> <ellipse cx="5.500" cy="6.100" rx="1" ry=".65" fill="#a8907c"/> <rect x="4.900" y="6.500" width="1.200" height="1.100" rx=".3" fill="#f7f3ea"/> <ellipse cx=".8" cy="7.700" rx=".8" ry=".95" fill="#e3ab86"/> <ellipse cx="10.200" cy="7.700" rx=".8" ry=".95" fill="#e3ab86"/> <ellipse cx="2.100" cy="14.300" rx=".95" ry=".7" fill="#e3ab86"/> <ellipse cx="8.900" cy="14.300" rx=".95" ry=".7" fill="#e3ab86"/></svg><span class="t" style="letter-spacing:-0.42px">demo19_select.go</span></div>
  <div class="row" style="left:0;top:403px"><svg style="left:5px;top:5px" width="8" height="9"><path d="M0 0L7.500 4.500L0 9z" fill="#9a9da0"/></svg><svg style="left:23px;top:3px" width="14" height="13" viewBox="0 0 14 13"><rect x="0" y="2" width="1.500" height="11" fill="#9aa7b0"/><rect x="3" y="0" width="1.500" height="13" fill="#62b543"/><rect x="6" y="3" width="1.500" height="10" fill="#40b6e0"/><rect x="9" y="1" width="1.500" height="12" fill="#9aa7b0"/><rect x="12" y="4" width="1.500" height="9" fill="#9aa7b0"/></svg><span class="t" id="extlib" style="left:41.300px;font-size:14px;letter-spacing:-0.21px">External Libraries</span></div>
  <!-- h scrollbar -->
  <div class="abs" style="left:3px;top:466px;width:189px;height:8px;border-radius:4px;background:#595b5d"></div>
</div>
<div class="vl" style="left:238px;top:27px;height:477px;background:#2d2f30"></div>

<!-- EDITOR TABS -->
<div id="tabbar" class="abs" style="left:239px;top:27px;width:1017px;height:24px;background:#3c3f41"></div>
<div class="tab" style="left:239px;width:159px;"><svg style="left:11.800px;top:4.800px" width="10.500" height="14.500" viewBox="0 0 11 15"><circle cx="1.700" cy="2.500" r="1.500" fill="#6db6e3"/> <circle cx="9.300" cy="2.500" r="1.500" fill="#6db6e3"/> <path d="M.9 5C.9 2 3 .3 5.500.3S10.100 2 10.100 5V12.200C10.100 14 8.400 14.800 5.500 14.800S.9 14 .9 12.200z" fill="#6db6e3"/> <circle cx="3.300" cy="4.500" r="2" fill="#fdfdfd"/> <circle cx="7.700" cy="4.500" r="2" fill="#fdfdfd"/> <rect x="4.500" y="3.800" width="2" height="1.800" fill="#fdfdfd"/> <circle cx="3.800" cy="4.700" r=".85" fill="#0a0a0a"/> <circle cx="7.200" cy="4.700" r=".85" fill="#0a0a0a"/> <ellipse cx="5.500" cy="6.100" rx="1" ry=".65" fill="#a8907c"/> <rect x="4.900" y="6.500" width="1.200" height="1.100" rx=".3" fill="#f7f3ea"/> <ellipse cx=".8" cy="7.700" rx=".8" ry=".95" fill="#e3ab86"/> <ellipse cx="10.200" cy="7.700" rx=".8" ry=".95" fill="#e3ab86"/> <ellipse cx="2.100" cy="14.300" rx=".95" ry=".7" fill="#e3ab86"/> <ellipse cx="8.900" cy="14.300" rx=".95" ry=".7" fill="#e3ab86"/></svg><span class="t" id="tab0" style="left:26.6px;letter-spacing:0.00px">demo16_newtimer.go</span><svg class="x" style="left:142.5px" width="8" height="8" viewBox="0 0 8 8"><path d="M.7.7L7.300 7.300M7.300.7L.7 7.300" stroke="#7c7f80" stroke-width="1.100" fill="none"/></svg></div>
<div class="tab" style="left:398px;width:136px;"><svg style="left:11.800px;top:4.800px" width="10.500" height="14.500" viewBox="0 0 11 15"><circle cx="1.700" cy="2.500" r="1.500" fill="#6db6e3"/> <circle cx="9.300" cy="2.500" r="1.500" fill="#6db6e3"/> <path d="M.9 5C.9 2 3 .3 5.500.3S10.100 2 10.100 5V12.200C10.100 14 8.400 14.800 5.500 14.800S.9 14 .9 12.200z" fill="#6db6e3"/> <circle cx="3.300" cy="4.500" r="2" fill="#fdfdfd"/> <circle cx="7.700" cy="4.500" r="2" fill="#fdfdfd"/> <rect x="4.500" y="3.800" width="2" height="1.800" fill="#fdfdfd"/> <circle cx="3.800" cy="4.700" r=".85" fill="#0a0a0a"/> <circle cx="7.200" cy="4.700" r=".85" fill="#0a0a0a"/> <ellipse cx="5.500" cy="6.100" rx="1" ry=".65" fill="#a8907c"/> <rect x="4.900" y="6.500" width="1.200" height="1.100" rx=".3" fill="#f7f3ea"/> <ellipse cx=".8" cy="7.700" rx=".8" ry=".95" fill="#e3ab86"/> <ellipse cx="10.200" cy="7.700" rx=".8" ry=".95" fill="#e3ab86"/> <ellipse cx="2.100" cy="14.300" rx=".95" ry=".7" fill="#e3ab86"/> <ellipse cx="8.900" cy="14.300" rx=".95" ry=".7" fill="#e3ab86"/></svg><span class="t" id="tab1" style="left:28.2px;letter-spacing:-0.09px">demo17_after.go</span><svg class="x" style="left:119.5px" width="8" height="8" viewBox="0 0 8 8"><path d="M.7.7L7.300 7.300M7.300.7L.7 7.300" stroke="#7c7f80" stroke-width="1.100" fill="none"/></svg></div>
<div class="tab" style="left:534px;width:142px;background:#4e5254;border-right-color:#4e5254;z-index:2"><svg style="left:11.800px;top:4.800px" width="10.500" height="14.500" viewBox="0 0 11 15"><circle cx="1.700" cy="2.500" r="1.500" fill="#6db6e3"/> <circle cx="9.300" cy="2.500" r="1.500" fill="#6db6e3"/> <path d="M.9 5C.9 2 3 .3 5.500.3S10.100 2 10.100 5V12.200C10.100 14 8.400 14.800 5.500 14.800S.9 14 .9 12.200z" fill="#6db6e3"/> <circle cx="3.300" cy="4.500" r="2" fill="#fdfdfd"/> <circle cx="7.700" cy="4.500" r="2" fill="#fdfdfd"/> <rect x="4.500" y="3.800" width="2" height="1.800" fill="#fdfdfd"/> <circle cx="3.800" cy="4.700" r=".85" fill="#0a0a0a"/> <circle cx="7.200" cy="4.700" r=".85" fill="#0a0a0a"/> <ellipse cx="5.500" cy="6.100" rx="1" ry=".65" fill="#a8907c"/> <rect x="4.900" y="6.500" width="1.200" height="1.100" rx=".3" fill="#f7f3ea"/> <ellipse cx=".8" cy="7.700" rx=".8" ry=".95" fill="#e3ab86"/> <ellipse cx="10.200" cy="7.700" rx=".8" ry=".95" fill="#e3ab86"/> <ellipse cx="2.100" cy="14.300" rx=".95" ry=".7" fill="#e3ab86"/> <ellipse cx="8.900" cy="14.300" rx=".95" ry=".7" fill="#e3ab86"/></svg><span class="t" id="tab2" style="left:27.0px;letter-spacing:-0.05px">demo18_select.go</span><svg class="x" style="left:125.5px" width="8" height="8" viewBox="0 0 8 8"><path d="M.7.7L7.300 7.300M7.300.7L.7 7.300" stroke="#7c7f80" stroke-width="1.100" fill="none"/></svg><div class="abs" style="left:0;bottom:0;width:142px;height:3px;background:#439fc4"></div></div>
<div class="tab" style="left:676px;width:144px;"><svg style="left:11.800px;top:4.800px" width="10.500" height="14.500" viewBox="0 0 11 15"><circle cx="1.700" cy="2.500" r="1.500" fill="#6db6e3"/> <circle cx="9.300" cy="2.500" r="1.500" fill="#6db6e3"/> <path d="M.9 5C.9 2 3 .3 5.500.3S10.100 2 10.100 5V12.200C10.100 14 8.400 14.800 5.500 14.800S.9 14 .9 12.200z" fill="#6db6e3"/> <circle cx="3.300" cy="4.500" r="2" fill="#fdfdfd"/> <circle cx="7.700" cy="4.500" r="2" fill="#fdfdfd"/> <rect x="4.500" y="3.800" width="2" height="1.800" fill="#fdfdfd"/> <circle cx="3.800" cy="4.700" r=".85" fill="#0a0a0a"/> <circle cx="7.200" cy="4.700" r=".85" fill="#0a0a0a"/> <ellipse cx="5.500" cy="6.100" rx="1" ry=".65" fill="#a8907c"/> <rect x="4.900" y="6.500" width="1.200" height="1.100" rx=".3" fill="#f7f3ea"/> <ellipse cx=".8" cy="7.700" rx=".8" ry=".95" fill="#e3ab86"/> <ellipse cx="10.200" cy="7.700" rx=".8" ry=".95" fill="#e3ab86"/> <ellipse cx="2.100" cy="14.300" rx=".95" ry=".7" fill="#e3ab86"/> <ellipse cx="8.900" cy="14.300" rx=".95" ry=".7" fill="#e3ab86"/></svg><span class="t" id="tab3" style="left:28.4px;letter-spacing:-0.05px">demo19_select.go</span><svg class="x" style="left:127.5px" width="8" height="8" viewBox="0 0 8 8"><path d="M.7.7L7.300 7.300M7.300.7L.7 7.300" stroke="#7c7f80" stroke-width="1.100" fill="none"/></svg></div>
<div class="tab" style="left:820px;width:93px;background:#3a3935;"><svg style="left:11.800px;top:4.800px" width="10.500" height="14.500" viewBox="0 0 11 15"><circle cx="1.700" cy="2.500" r="1.500" fill="#6db6e3"/> <circle cx="9.300" cy="2.500" r="1.500" fill="#6db6e3"/> <path d="M.9 5C.9 2 3 .3 5.500.3S10.100 2 10.100 5V12.200C10.100 14 8.400 14.800 5.500 14.800S.9 14 .9 12.200z" fill="#6db6e3"/> <circle cx="3.300" cy="4.500" r="2" fill="#fdfdfd"/> <circle cx="7.700" cy="4.500" r="2" fill="#fdfdfd"/> <rect x="4.500" y="3.800" width="2" height="1.800" fill="#fdfdfd"/> <circle cx="3.800" cy="4.700" r=".85" fill="#0a0a0a"/> <circle cx="7.200" cy="4.700" r=".85" fill="#0a0a0a"/> <ellipse cx="5.500" cy="6.100" rx="1" ry=".65" fill="#a8907c"/> <rect x="4.900" y="6.500" width="1.200" height="1.100" rx=".3" fill="#f7f3ea"/> <ellipse cx=".8" cy="7.700" rx=".8" ry=".95" fill="#e3ab86"/> <ellipse cx="10.200" cy="7.700" rx=".8" ry=".95" fill="#e3ab86"/> <ellipse cx="2.100" cy="14.300" rx=".95" ry=".7" fill="#e3ab86"/> <ellipse cx="8.900" cy="14.300" rx=".95" ry=".7" fill="#e3ab86"/></svg><svg style="left:18.800px;top:13px" width="5.500" height="7" viewBox="0 0 5.500 7"><path d="M1.300 3V2.200A1.450 1.450 0 0 1 4.200 2.200V3" stroke="#b4bcc4" stroke-width="1" fill="none"/><rect x="0" y="2.800" width="5.500" height="4.200" fill="#b4bcc4"/><rect x="2.300" y="4" width=".9" height="1.800" fill="#6a7078"/></svg><span class="t" id="tab4" style="left:27.1px;letter-spacing:0.05px">sleep.go</span><svg class="x" style="left:77.3px" width="8" height="8" viewBox="0 0 8 8"><path d="M.7.7L7.300 7.300M7.300.7L.7 7.300" stroke="#7c7f80" stroke-width="1.100" fill="none"/></svg></div>
<div class="hl" style="left:239px;top:50px;width:1017px;background:#4d5052"></div>

<!-- EDITOR -->
<div id="editor" class="abs" style="left:239px;top:51px;width:1017px;height:431px;overflow:hidden">
<div class="abs" style="left:0;top:0;width:1017px;height:432px;background:#2b2b2b"></div>
<div class="abs" style="left:0;top:236px;width:1017px;height:17px;background:#323232"></div>
<div class="abs" style="left:0;top:0;width:57px;height:432px;background:#313335"></div>
<div class="abs" style="left:57px;top:0;width:1px;height:432px;background:#555758"></div>
<div class="ig" style="left:97px;top:134px;height:34px"></div>
<div class="ig" style="left:97px;top:202px;height:34px"></div>
<div class="ig" style="left:97px;top:304px;height:17px"></div>
<div class="ig" style="left:97px;top:338px;height:102px"></div>
<div class="ig" style="left:129px;top:355px;height:17px"></div>
<div class="ig" style="left:129px;top:389px;height:17px"></div>
<div class="ln" style="left:0;top:-2px">12</div>
<div class="cl" style="left:63px;top:-2px">        <span class="c"><span class="z">但是</span>select<span class="z">会随机执行一个可运行的</span>case<span class="z">。</span></span></div>
<div class="ln" style="left:0;top:15px">13</div>
<div class="cl" style="left:63px;top:15px">        <span class="c"><span class="z">如果没有</span>case<span class="z">可运行，它将阻塞，直到有</span>case<span class="z">可运行。</span></span></div>
<div class="ln" style="left:0;top:32px">14</div>
<div class="cl" style="left:63px;top:32px"><span class="c">     <span class="as">*</span>/</span></div>
<div class="ln" style="left:0;top:49px">15</div>
<div class="ln" style="left:0;top:66px">16</div>
<div class="cl" style="left:63px;top:66px">    ch1 := <span class="f">make</span>(<span class="k">chan</span> <span class="ty">int</span>)</div>
<div class="ln" style="left:0;top:83px">17</div>
<div class="cl" style="left:63px;top:83px">    ch2 := <span class="f">make</span>(<span class="k">chan</span> <span class="ty">int</span>)</div>
<div class="ln" style="left:0;top:100px">18</div>
<div class="ln" style="left:0;top:117px">19</div>
<div class="cl" style="left:63px;top:117px">    <span class="k">go func</span>() {</div>
<div class="ln" style="left:0;top:134px">20</div>
<div class="cl" style="left:63px;top:134px">        time.Sleep(<span class="n">2</span> <span class="as">*</span> time.<span class="cn">Second</span>)</div>
<div class="ln" style="left:0;top:151px">21</div>
<div class="cl" style="left:63px;top:151px">        ch2 &lt;<span class="da">-</span> <span class="n">200</span></div>
<div class="ln" style="left:0;top:168px">22</div>
<div class="cl" style="left:63px;top:168px">    }()</div>
<div class="ln" style="left:0;top:185px">23</div>
<div class="cl" style="left:63px;top:185px">    <span class="k">go func</span>() {</div>
<div class="ln" style="left:0;top:202px">24</div>
<div class="cl" style="left:63px;top:202px">        time.Sleep(<span class="n">2</span> <span class="as">*</span> time.<span class="cn">Second</span>)</div>
<div class="ln" style="left:0;top:219px">25</div>
<div class="cl" style="left:63px;top:219px">        ch1 &lt;<span class="da">-</span> <span class="n">100</span></div>
<div class="ln" style="left:0;top:236px">26</div>
<div class="cl" style="left:63px;top:236px">    }<span class="mb">()</span></div>
<div class="ln" style="left:0;top:253px">27</div>
<div class="ln" style="left:0;top:270px">28</div>
<div class="cl" style="left:63px;top:270px">    <span class="k">select</span> {</div>
<div class="ln" style="left:0;top:287px">29</div>
<div class="cl" style="left:63px;top:287px">    <span class="k">case</span> num1 := &lt;<span class="da">-</span>ch1:</div>
<div class="ln" style="left:0;top:304px">30</div>
<div class="cl" style="left:63px;top:304px">        fmt.Println(<span class="hint">a:</span><span class="s">"ch1<span class="z">中取数据。。</span>"</span><span class="cm">,</span> num1)</div>
<div class="ln" style="left:0;top:321px">31</div>
<div class="cl" style="left:63px;top:321px">    <span class="k">case</span> num2<span class="cm">,</span> ok := &lt;<span class="da">-</span>ch2:</div>
<div class="ln" style="left:0;top:338px">32</div>
<div class="cl" style="left:63px;top:338px">        <span class="k">if</span> ok {</div>
<div class="ln" style="left:0;top:355px">33</div>
<div class="cl" style="left:63px;top:355px">            fmt.Println(<span class="hint">a:</span><span class="s">"ch2<span class="z">中取数据。。</span>"</span><span class="cm">,</span> num2)</div>
<div class="ln" style="left:0;top:372px">34</div>
<div class="cl" style="left:63px;top:372px">        }<span class="k">else</span>{</div>
<div class="ln" style="left:0;top:389px">35</div>
<div class="cl" style="left:63px;top:389px">            fmt.Println(<span class="hint">a:</span><span class="s">"ch2<span class="z">通道已经关闭。。</span>"</span>)</div>
<div class="ln" style="left:0;top:406px">36</div>
<div class="cl" style="left:63px;top:406px">        }</div>
<div class="ln" style="left:0;top:423px">37</div>
<svg style="left:53px;top:35.5px" width="9" height="10.5" viewBox="0 0 9 10.5"><path d="M.5 10V3.700L4.500 .5L8.500 3.700V10z" fill="#2b2b2b" stroke="#5e6164" stroke-width="1"/> <path d="M2.200 6H6.800" stroke="#6c6f72" stroke-width="1"/></svg>
<svg style="left:53px;top:171.5px" width="9" height="10.5" viewBox="0 0 9 10.5"><path d="M.5 10V3.700L4.500 .5L8.500 3.700V10z" fill="#2b2b2b" stroke="#5e6164" stroke-width="1"/> <path d="M2.200 6H6.800" stroke="#6c6f72" stroke-width="1"/></svg>
<svg style="left:53px;top:239.5px" width="9" height="10.5" viewBox="0 0 9 10.5"><path d="M.5 10V3.700L4.500 .5L8.500 3.700V10z" fill="#2b2b2b" stroke="#5e6164" stroke-width="1"/> <path d="M2.200 6H6.800" stroke="#6c6f72" stroke-width="1"/></svg>
<svg style="left:53px;top:307.5px" width="9" height="10.5" viewBox="0 0 9 10.5"><path d="M.5 10V3.700L4.500 .5L8.500 3.700V10z" fill="#2b2b2b" stroke="#5e6164" stroke-width="1"/> <path d="M2.200 6H6.800" stroke="#6c6f72" stroke-width="1"/></svg>
<svg style="left:53px;top:375.5px" width="9" height="10.5" viewBox="0 0 9 10.5"><path d="M.5 10V3.700L4.500 .5L8.500 3.700V10z" fill="#2b2b2b" stroke="#5e6164" stroke-width="1"/> <path d="M2.200 6H6.800" stroke="#6c6f72" stroke-width="1"/></svg>
<svg style="left:53px;top:409.5px" width="9" height="10.5" viewBox="0 0 9 10.5"><path d="M.5 10V3.700L4.500 .5L8.500 3.700V10z" fill="#2b2b2b" stroke="#5e6164" stroke-width="1"/> <path d="M2.200 6H6.800" stroke="#6c6f72" stroke-width="1"/></svg>
<svg style="left:53px;top:121.5px" width="9" height="10.5" viewBox="0 0 9 10.5"><path d="M.5 .5H8.500V6.800L4.500 10L.5 6.800z" fill="#2b2b2b" stroke="#5e6164" stroke-width="1"/> <path d="M2.200 4.500H6.800" stroke="#6c6f72" stroke-width="1"/></svg>
<svg style="left:53px;top:189.5px" width="9" height="10.5" viewBox="0 0 9 10.5"><path d="M.5 .5H8.500V6.800L4.500 10L.5 6.800z" fill="#2b2b2b" stroke="#5e6164" stroke-width="1"/> <path d="M2.200 4.500H6.800" stroke="#6c6f72" stroke-width="1"/></svg>
<svg style="left:53px;top:274.5px" width="9" height="10.5" viewBox="0 0 9 10.5"><path d="M.5 .5H8.500V6.800L4.500 10L.5 6.800z" fill="#2b2b2b" stroke="#5e6164" stroke-width="1"/> <path d="M2.200 4.500H6.800" stroke="#6c6f72" stroke-width="1"/></svg>
<svg style="left:53px;top:291.5px" width="9" height="10.5" viewBox="0 0 9 10.5"><path d="M.5 .5H8.500V6.800L4.500 10L.5 6.800z" fill="#2b2b2b" stroke="#5e6164" stroke-width="1"/> <path d="M2.200 4.500H6.800" stroke="#6c6f72" stroke-width="1"/></svg>
<svg style="left:53px;top:325.5px" width="9" height="10.5" viewBox="0 0 9 10.5"><path d="M.5 .5H8.500V6.800L4.500 10L.5 6.800z" fill="#2b2b2b" stroke="#5e6164" stroke-width="1"/> <path d="M2.200 4.500H6.800" stroke="#6c6f72" stroke-width="1"/></svg>
<svg style="left:53px;top:342.5px" width="9" height="10.5" viewBox="0 0 9 10.5"><path d="M.5 .5H8.500V6.800L4.500 10L.5 6.800z" fill="#2b2b2b" stroke="#5e6164" stroke-width="1"/> <path d="M2.200 4.500H6.800" stroke="#6c6f72" stroke-width="1"/></svg>
</div>
<svg style="left:1243px;top:53px" width="11" height="9" viewBox="0 0 11 9"><path d="M.8 4L4.300 7.500L10.300 1" stroke="#59a94a" stroke-width="2.200" fill="none"/></svg>
<div class="abs" style="left:1245px;top:170px;width:8px;height:224px;border-radius:4px;background:#555759"></div>
<div class="hl" style="left:239px;top:482px;width:1017px;background:#3a3c3e"></div>
<div id="crumb" class="abs" style="left:239px;top:483px;width:1017px;height:21px;background:#313335"><span class="t" id="mainfn" style="left:67px;top:3px;font-size:12.5px;color:#bbbbbb">main()</span></div>
<div class="hl" style="left:18px;top:504px;width:1238px;background:#555555"></div>

<!-- RUN PANEL -->
<div id="runp" class="abs" style="left:18px;top:505px;width:1238px;height:203px;background:#3c3f41">
  <!-- header (abs y 505..526) -->
  <span class="t" id="runlbl" style="left:5px;top:3px;font-size:11.5px;letter-spacing:-0.8px;color:#9da0a2">Run</span>
  <svg style="left:29.800px;top:3.700px" width="13.500" height="14.500" viewBox="0 0 14 15"><circle cx="1.700" cy="2.500" r="1.500" fill="#4f6e85"/> <circle cx="9.300" cy="2.500" r="1.500" fill="#4f6e85"/> <path d="M.9 5C.9 2 3 .3 5.500.3S10.100 2 10.100 5V12.200C10.100 14 8.400 14.800 5.500 14.800S.9 14 .9 12.200z" fill="#4f6e85"/> <circle cx="3.400" cy="4.500" r="1.800" fill="#aeb8c0"/> <circle cx="7.600" cy="4.500" r="1.800" fill="#aeb8c0"/> <rect x="4.500" y="3.900" width="2" height="1.600" fill="#aeb8c0"/> <circle cx="3.800" cy="4.700" r=".85" fill="#151515"/> <circle cx="7.200" cy="4.700" r=".85" fill="#151515"/> <ellipse cx="5.500" cy="6.100" rx="1" ry=".65" fill="#3a3a3a"/> <ellipse cx=".8" cy="7.700" rx=".7" ry=".9" fill="#8a7566"/> <ellipse cx="10.200" cy="7.300" rx=".6" ry=".8" fill="#8a7566"/> <ellipse cx="2.100" cy="14.300" rx=".9" ry=".7" fill="#8a7566"/> <path d="M8.300 7.400L13.600 11L8.300 14.600z" fill="#4f9a48"/></svg>
  <span class="t" id="runcfg" style="left:47px;top:3px;font-size:11.5px;color:#9da0a2">go build demo18_select.go</span>
  <svg style="left:1191px;top:5px" width="12" height="12.400" viewBox="0 0 14 14"><g fill="#a4a6a8"> <circle cx="7" cy="7" r="4.6"/> <rect x="5.900" y="0" width="2.200" height="14"/> <rect x="5.900" y="0" width="2.200" height="14" transform="rotate(45 7 7)"/> <rect x="5.900" y="0" width="2.200" height="14" transform="rotate(90 7 7)"/> <rect x="5.900" y="0" width="2.200" height="14" transform="rotate(135 7 7)"/> </g> <circle cx="7" cy="7" r="1.900" fill="#3c3f41"/></svg>
  <svg style="left:1205px;top:9.800px" width="5" height="3.200"><path d="M0 0H5L2.500 3.200z" fill="#8a8c8e"/></svg>
  <svg style="left:1220px;top:5px" width="11" height="13" viewBox="0 0 11 13"><path d="M3.500 0V7M1 4.800L3.500 7.500L6 4.800" stroke="#afb1b3" stroke-width="1.100" fill="none"/><rect x="0" y="9" width="6" height="3.200" fill="#9a9c9e"/><rect x="5.500" y="9.500" width="5" height="2.200" fill="none" stroke="#d0d2d4" stroke-width="1"/></svg>
  <div class="hl" style="left:0;top:22px;width:1238px;background:#2d2f30"></div>
  <!-- console bg (abs x 78..1255, y 528..708) -->
  <div class="abs" style="left:59px;top:23px;width:1179px;height:180px;background:#2b2b2b"></div>
  <div class="vl" style="left:29px;top:23px;height:180px;background:#515355"></div>
  <!-- toolbar 1 -->
  <svg style="left:9px;top:30px" width="11" height="14" viewBox="0 0 10 14" preserveAspectRatio="none"><path d="M0 0L10 7L0 14z" fill="#3fae47"/></svg>
  <div class="abs" style="left:8px;top:56px;width:12px;height:12px;background:#585b5d"></div>
  <div class="abs" style="left:9px;top:81px;width:4px;height:12px;background:#585b5d"></div>
  <div class="abs" style="left:15px;top:81px;width:4px;height:12px;background:#585b5d"></div>
  <div class="abs" style="left:4px;top:103px;width:22px;height:1px;background-image:linear-gradient(90deg,#6e7173 50%,transparent 50%);background-size:3px 1px"></div>
  <svg style="left:7px;top:110px" width="15" height="15" viewBox="0 0 15 15"><rect x=".5" y=".5" width="7.500" height="6" fill="#2f6f9f" stroke="#4a9cd0"/><rect x="2.500" y="2.500" width="3.500" height="2" fill="#9fc6e0"/><rect x="10" y=".5" width="4.500" height="6" fill="none" stroke="#8c8e90"/><rect x="11.500" y="2.500" width="1.500" height="2.500" fill="#8c8e90"/><rect x=".5" y="9" width="14" height="5" fill="none" stroke="#8c8e90"/><rect x="2.500" y="11" width="10" height="1" fill="#8c8e90"/></svg>
  <div class="abs" style="left:4px;top:134px;width:22px;height:1px;background-image:linear-gradient(90deg,#6e7173 50%,transparent 50%);background-size:3px 1px"></div>
  <svg style="left:6px;top:142px" width="16" height="16" viewBox="0 0 16 16"><path d="M3 8.800L5.600 11.400L.1 14.800z" fill="#8a8c8e"/><ellipse cx="7.400" cy="7.600" rx="6" ry="2.400" transform="rotate(43 7.400 7.600)" fill="#b07fd0"/><circle cx="9.200" cy="5.800" r="2.100" fill="#77797b"/><ellipse cx="12" cy="3" rx="4" ry="1.900" transform="rotate(43 12 3)" fill="#b484d2"/></svg>
  <svg style="left:8px;top:168px" width="12" height="12" viewBox="0 0 12 12"><path d="M1 1L11 11M11 1L1 11" stroke="#e05d4f" stroke-width="2" fill="none"/></svg>
  <span class="t" style="left:10.500px;top:184.500px;font-size:13.5px;color:#a8abad;letter-spacing:-1.200px;-webkit-text-stroke:0.3px">&rsaquo;&rsaquo;</span>
  <!-- toolbar 2 -->
  <svg style="left:38px;top:30px" width="12" height="12" viewBox="0 0 12 12"><path d="M6 0L12 6.500H8V12H4V6.500H0z" fill="#585b5d"/></svg>
  <svg style="left:38px;top:55px" width="12" height="12" viewBox="0 0 12 12"><path d="M6 12L12 5.500H8V0H4V5.500H0z" fill="#585b5d"/></svg>
  <svg style="left:36.800px;top:77.800px" width="14.500" height="15.500" viewBox="0 0 14.500 15.500"><path d="M0 1.200H10M4 5.200H8M6 9.200H10M0 13.200H8" stroke="#c4c6c8" stroke-width="1.100"/><path d="M11 1.200H13.200V5.200H10.500M2.800 5.200H1V9.200H4M11 9.200H13.200V13.200H10.500" stroke="#3f9fd8" stroke-width="1.100" fill="none"/><path d="M9 5.200L11.300 3.200V7.200zM5.500 9.200L3.200 7.200V11.200zM9 13.200L11.300 11.200V15.200z" fill="#3f9fd8"/></svg>
  <div class="abs" style="left:33px;top:100px;width:23px;height:23px;border:1px solid #707375;border-radius:3px;background:#55585a"></div>
  <svg style="left:37px;top:103.900px" width="14.500" height="14.500" viewBox="0 0 14.500 14.500"><rect x=".5" y="1.700" width="13" height="12" fill="#5c5f61" stroke="#909294" stroke-width="1"/><rect x=".5" y="1.700" width="13" height="1.800" fill="#909294"/><rect x="2.500" y="5" width="9" height="6.800" fill="#55585a"/><path d="M8.600 0H11.600V6H14.300L10.100 11.200L5.900 6H8.600z" fill="#b070d0"/></svg>
  <svg style="left:36.800px;top:128.500px" width="14.500" height="14.700" viewBox="0 0 14.500 14.700"><rect x="3.200" y=".3" width="8.100" height="2.400" fill="#b4b6b8"/><path d="M1 1.800H13.500Q14.500 1.800 14.500 2.800V9.500H11.300V6.300H3.200V9.500H0V2.800Q0 1.800 1 1.800z" fill="#3f9fd8"/><rect x="2.800" y="6.300" width="8.900" height="8.400" fill="#3c3f41"/><rect x="3.600" y="7.100" width="7.300" height="7.600" fill="#b4b6b8"/><rect x="5.600" y="8.600" width="3.300" height="1.500" fill="#4a4d4f"/><rect x="5.600" y="11" width="3.300" height="1.500" fill="#4a4d4f"/><rect x="6.100" y="9" width="2.300" height=".7" fill="#ffffff"/><rect x="6.100" y="11.400" width="2.300" height=".7" fill="#ffffff"/><rect x="2.800" y="2.700" width="8.900" height=".7" fill="#3c3f41"/></svg>
  <svg style="left:36.800px;top:152.800px" width="14.500" height="15.400" viewBox="0 0 14.500 15.400"><path d="M5 2.300Q7.250 -.3 9.500 2.300" stroke="#b4b6b8" stroke-width="1.200" fill="none"/><rect x="0" y="2.500" width="14.500" height="1.700" fill="#b4b6b8"/><path d="M1 4.800H13.500V13.400Q13.500 15.400 11.500 15.400H3Q1 15.400 1 13.400z" fill="#3a96cc"/><path d="M2.900 7V13.300M5.800 7V13.300M8.800 7V13.300M11.700 7V13.300" stroke="#2a4a60" stroke-width=".9"/></svg>
  <!-- console text -->
  <svg style="left:61px;top:26.500px" width="9" height="9" viewBox="0 0 9 9"><rect x=".5" y=".5" width="8" height="8" fill="#2b2b2b" stroke="#55585a"/><path d="M2.500 4.500H6.500M4.500 2.500V6.500" stroke="#8a8d8f" stroke-width="1"/></svg>
  <div class="abs" style="left:71px;top:23px;width:144px;height:15px;background:#3a3a3a"></div>
  <span class="con" id="con0" style="left:71px;top:23px;color:#8a8a8a">&lt;4 go setup calls&gt;</span>
  <span class="con" id="con1" style="left:71px;top:39px">ch2<span class="zc">中取数据。。</span> 200</span>
  <span class="con" id="con2" style="left:71px;top:73px">Process finished with exit code 0</span>
  <!-- red annotation -->
  <div class="abs" style="left:55.8px;top:34.5px;width:182.600px;height:32px;border:3px solid #f9401f;border-radius:7px"></div>
</div>
<div class="hl" style="left:0;top:708px;width:1270px;background:#555555"></div>
<div class="vl" style="left:1256px;top:27px;height:681px;width:2px;background:#585b5d"></div>

<!-- RIGHT STRIPE -->
<div id="rstripe" class="abs" style="left:1258px;top:27px;width:12px;height:681px;background:#3c3f41">
  <svg style="left:1.800px;top:9.700px" width="12" height="13.200" viewBox="0 0 12 13.200"><ellipse cx="6" cy="2.300" rx="6" ry="2.300" fill="#3c9fc8"/><path d="M0 3.800Q6 7 12 3.800V6.200Q6 9.400 12 6.200z" fill="none"/><path d="M0 3.600Q6 6.600 12 3.600V6Q6 9 0 6z" fill="#3c9fc8"/><path d="M0 6.900Q6 9.900 12 6.900V9.300Q6 12.300 0 9.300z" fill="#3c9fc8"/><path d="M0 10.200Q6 13.200 12 10.200V11.400Q6 14.600 0 11.400z" fill="#3c9fc8"/></svg>
  <span class="vt" id="v4" style="left:15px;top:27.500px;transform:rotate(90deg);font-size:11.6px">Database</span>
</div>

<!-- STATUS BAR -->
<div id="botbar" class="abs" style="left:0;top:709px;width:1270px;height:26px;background:#3c3f41">
  <div class="abs" style="left:17px;top:0;width:68px;height:22px;background:#2d2f30"></div>
  <svg style="left:28px;top:5px" width="11" height="13" viewBox="0 0 10 14" preserveAspectRatio="none"><path d="M0 0L10 7L0 14z" fill="#3fae47"/></svg>
  <span class="t" id="b1" style="left:44px;top:3px;font-size:11.5px;letter-spacing:-0.35px;color:#dcdcdc;-webkit-text-stroke:0.3px"><u>4</u>: Run</span>
  <svg style="left:96px;top:4px" width="14" height="14" viewBox="0 0 14 14"><circle cx="8.500" cy="8.600" r="3.400" fill="#f0a860"/><path d="M4.800 8C4.800 4 12.200 4 12.200 8L11.300 7.300C9.500 6.300 7.500 6.300 5.700 7.300z" fill="#6a6d70"/><circle cx="7.300" cy="8.800" r=".5" fill="#3c3f41"/><circle cx="9.700" cy="8.800" r=".5" fill="#3c3f41"/><path d="M5 13.800C5 11 12 11 12 13.800z" fill="#3592c4"/><circle cx="3" cy="4.300" r="2.600" fill="#ececec"/><path d="M1.500 3.600H4.500M1.500 5H4.500" stroke="#3c3f41" stroke-width=".8"/></svg>
  <span class="t" id="b2" style="left:113px;top:3px;font-size:11.5px;letter-spacing:-0.2px;-webkit-text-stroke:0.2px"><u>6</u>: TODO</span>
  <svg style="left:178px;top:5.200px" width="13" height="12.200" viewBox="0 0 13 12.200"><rect x="0" y="0" width="13" height="12.200" fill="#8c8e90"/><rect x="1" y="2.200" width="11" height="9" fill="#0c0c0c"/><path d="M2.800 4.500L5.200 6.700L2.800 8.900M6.200 9.300H9.200" stroke="#f0f0f0" stroke-width="1.100" fill="none"/></svg>
  <span class="t" id="b3" style="left:195px;top:3px;font-size:11.5px;-webkit-text-stroke:0.2px">Terminal</span>
  <svg style="left:1174.500px;top:4px" width="17" height="15" viewBox="0 0 17 15"><circle cx="7.500" cy="7" r="7" fill="#5fb865"/><path d="M10 12L16.200 14.600L13.800 8.500z" fill="#5fb865"/></svg>
  <span class="t b" id="evn" style="left:1179.300px;top:2.300px;font-size:10.5px;font-weight:bold;color:#1e2b20;-webkit-text-stroke:0.3px">2</span>
  <span class="t" id="b4" style="left:1195.500px;top:3px;font-size:11.5px;letter-spacing:-0.2px;-webkit-text-stroke:0.2px">Event Log</span>
  <div class="hl" style="left:0;top:22px;width:1270px;background:#515355"></div>
</div>

</div>
</body>
</html>
